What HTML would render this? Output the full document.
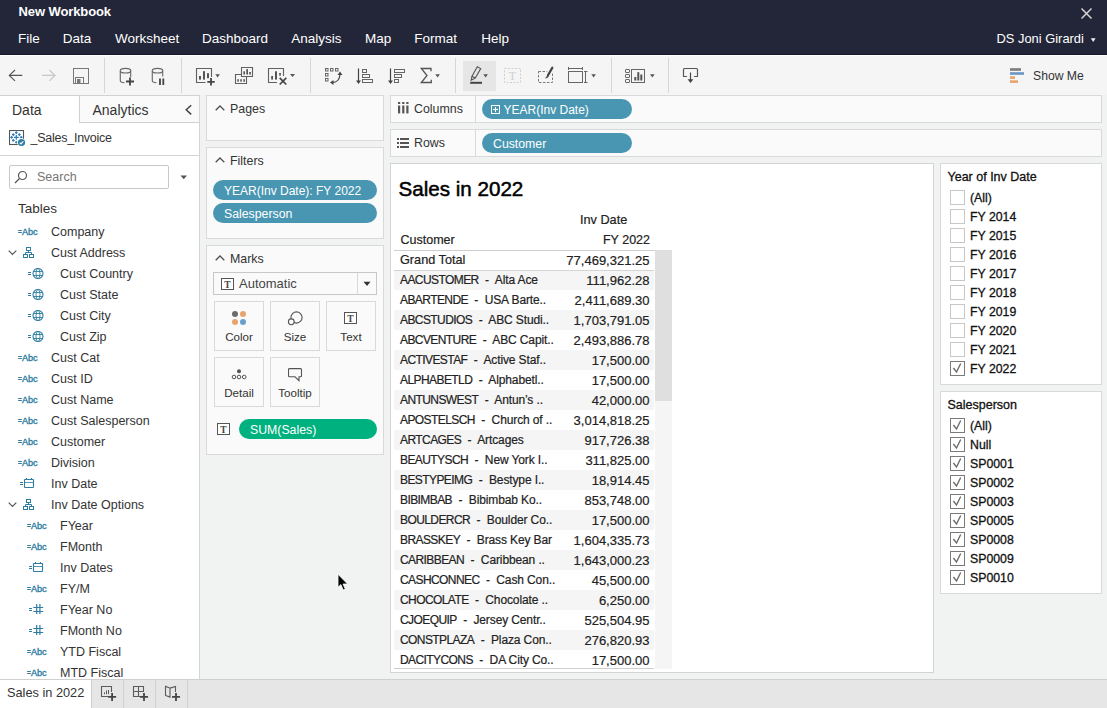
<!DOCTYPE html>
<html><head><meta charset="utf-8"><title>New Workbook</title>
<style>
*{box-sizing:border-box}
html,body{margin:0;padding:0}
body{width:1107px;height:708px;overflow:hidden;background:#f1f3f3;font-family:"Liberation Sans",Arial,sans-serif;font-size:13px;color:#333;position:relative}
.abs{position:absolute}
#hdr{left:0;top:0;width:1107px;height:55px;background:#232638;color:#fff;border-bottom:1px solid #14162a}
#hdr .title{left:18.500px;top:3.600px;font-size:13px;font-weight:bold;letter-spacing:-0.100px}
#hdr .menu span{position:absolute;top:30.700px;font-size:13.500px;white-space:nowrap}
#tb{left:0;top:55px;width:1107px;height:40px;background:#f5f5f5;box-shadow:inset 0 1px 0 #fff}
.sep{position:absolute;top:3px;width:1px;height:35px;background:#dcdcdc}
#left{left:0;top:95px;width:200px;height:584px;background:#fff;border-right:1px solid #d4d4d4;border-top:1px solid #d2d2d2;overflow:hidden}
.fr{position:absolute;left:0;height:21px;line-height:21px;white-space:nowrap;font-size:12.500px;color:#333}
.fr .lbl{position:absolute;top:1px}
.fi{position:absolute}
.abc{color:#2e7c9f;font-size:9.200px;letter-spacing:-0.2px;top:1px;-webkit-text-stroke:0.350px #2e7c9f}
.abc i{font-style:normal;font-size:6.500px;position:relative;top:-1.200px;letter-spacing:0;margin-right:0.300px}
.card{position:absolute;background:#fafafa;border:1px solid #d9d9d9}
.pill{position:absolute;height:20px;border-radius:10px;color:#fff;font-size:12.300px;line-height:23px;white-space:nowrap;overflow:hidden}
.blue{background:#4996b2}
.green{background:#00b180}
.ctitle{position:absolute;font-size:12.400px;color:#333;margin-top:1px}
.mbtn{position:absolute;width:50px;height:50px;border:1px solid #d9d9d9;background:#fafafa;text-align:center;font-size:12px}
.mbtn span{position:absolute;left:0;width:100%;top:27.900px;font-size:11.600px}
#view{left:390px;top:163px;width:544px;height:510px;background:#fff;border:1px solid #d4d4d4}
.vt{font-family:"Liberation Sans",sans-serif;-webkit-text-stroke:0.200px #222}
.row{position:absolute;left:3px;width:260px;height:20px}
.row .c1{position:absolute;left:6px;top:0;line-height:20px;font-size:12px;letter-spacing:-0.120px;white-space:nowrap;color:#222}
.row .c2{position:absolute;right:22px;top:-0.500px;line-height:21px;font-size:13px;white-space:nowrap;color:#222}
.row .c1 b{font-weight:normal;letter-spacing:-0.580px}
.shade{background:#f5f5f5}
.cb{position:absolute;left:9px;width:15px;height:15px;border:1px solid #c8c8c8;background:#fff}
.cb.on{border-color:#7a7a7a}
.fl{position:absolute;left:29px;font-size:12.300px;color:#111;-webkit-text-stroke:0.300px #111;white-space:nowrap;line-height:19px}
#bot{left:0;top:679px;width:1107px;height:29px;background:#e6e6e6;border-top:1px solid #cfcfcf}
</style></head><body>

<div id="hdr" class="abs"><div class="abs title">New Workbook</div><div class="menu">
<span style="left:18px">File</span>
<span style="left:62.8px">Data</span>
<span style="left:115px">Worksheet</span>
<span style="left:202px">Dashboard</span>
<span style="left:291.3px">Analysis</span>
<span style="left:365px">Map</span>
<span style="left:414.3px">Format</span>
<span style="left:481.2px">Help</span>
<span style="left:996.500px;font-size:12.900px;top:31.200px">DS Joni Girardi</span>
</div>
<svg class="abs" style="left:1080px;top:7px" width="13" height="13" viewBox="0 0 13 13"><path d="M1.500 1.500L11.500 11.500M11.500 1.500L1.500 11.500" stroke="#d4d4d4" stroke-width="1.500" fill="none"/></svg>
<svg class="abs" style="left:1090px;top:37px" width="7" height="6" viewBox="0 0 7 6"><path d="M0.800 1.200H5.600L3.200 5Z" fill="#f0f0f0"/></svg>
</div>
<div id="tb" class="abs">
<svg class="abs" style="left:0;top:0" width="1107" height="40" viewBox="0 0 1107 40">
<g fill="none" stroke="#555" stroke-width="1.150">
<path d="M9.300 20.400H22.300M15 15L9.300 20.400L15 25.800"/>
</g>
<g fill="none" stroke="#c6c6c6" stroke-width="1.150">
<path d="M42 20.400H55M49.300 15L55 20.400L49.300 25.800"/>
</g>
<g fill="none" stroke="#777" stroke-width="1">
<rect x="73.500" y="13.500" width="15" height="15"/>
<rect x="75.500" y="22.500" width="8" height="6"/>
<rect x="77.500" y="24.500" width="2.500" height="4" fill="#777"/>
</g>
<g fill="#d6d6d6">
<rect x="104" y="3" width="1" height="35"/><rect x="181" y="3" width="1" height="35"/><rect x="310" y="3" width="1" height="35"/><rect x="455" y="3" width="1" height="35"/><rect x="611" y="3" width="1" height="35"/><rect x="668" y="3" width="1" height="35"/>
</g>
<rect x="463" y="6" width="33" height="30" fill="#e6e6e6"/>
<!-- cylinders -->
<g fill="none" stroke="#6a6a6a" stroke-width="1.150">
<ellipse cx="125.500" cy="15.700" rx="5.200" ry="2.300"/>
<path d="M120.300 15.700V25.500C120.300 26.800 122 27.700 124.500 27.800M130.700 15.700V22"/>
<ellipse cx="157.500" cy="15.700" rx="5.200" ry="2.300"/>
<path d="M152.300 15.700V25.500C152.300 26.800 154 27.700 156.500 27.800M162.700 15.700V21.500"/>
</g>
<g fill="none" stroke="#444" stroke-width="1.800">
<path d="M130 22.500V30.500M126 26.500H134"/>
<path d="M160 23.500V30M163.300 23.500V30"/>
</g>
<!-- new worksheet chart+ -->
<g fill="none" stroke="#606060" stroke-width="1.100">
<path d="M211.500 22V13.500H196.500V27.500H205.500"/>
<path d="M241.500 19.500H235.500V28.500H246.500V22M241.500 12.500H252.500V21.500H241.500Z"/>
<path d="M283.500 21V13.500H268.500V27.500H277"/>
</g>
<g fill="#555">
<rect x="199" y="21" width="2" height="3.600"/><rect x="203" y="16.200" width="2" height="8.400"/><rect x="207" y="18.200" width="2" height="5"/>
<rect x="271.200" y="21" width="1.800" height="3.600"/><rect x="275" y="16.300" width="2" height="8.300"/><rect x="279.200" y="18" width="1.700" height="2.600"/>
<rect x="243.400" y="16.300" width="1.600" height="3.200"/><rect x="246.300" y="14.100" width="1.700" height="5.400"/><rect x="249.200" y="17" width="1.700" height="2.500"/>
<rect x="237.300" y="24.200" width="1.500" height="2.500"/><rect x="240.300" y="24.200" width="1.500" height="2.500"/><rect x="243.400" y="24.200" width="1.500" height="2.500"/>
<path d="M215.300 19.300H219.900L217.600 22.400Z"/><path d="M290 19H295L292.500 22.100Z"/><path d="M435.300 19.300H439.900L437.600 22.400Z"/>
<path d="M483.300 19.300H487.900L485.600 22.400Z"/><path d="M591.300 19.300H595.900L593.600 22.400Z"/><path d="M650 19.300H654.600L652.300 22.400Z"/>
</g>
<g fill="none" stroke="#444" stroke-width="1.800">
<path d="M211 23.100V30.500M207.300 26.800H214.700"/>
<path d="M279.700 22.900L286.300 29.500M286.300 22.900L279.700 29.500" stroke-width="1.700"/>
</g>
<!-- swap -->
<g fill="none" stroke="#666" stroke-width="1">
<rect x="325.500" y="13.500" width="2.500" height="2.500"/><rect x="330.500" y="13.500" width="2.500" height="2.500"/><rect x="335.500" y="13.500" width="2.500" height="2.500"/>
<rect x="325.500" y="18.500" width="2.500" height="2.500"/><rect x="325.500" y="23.500" width="2.500" height="2.500"/>
<path d="M340 19C340 24 337 27.500 332 27.500" stroke="#444" stroke-width="1.200"/>
</g>
<path d="M337.500 20L340 16.500L342.500 20ZM333.500 25L330 27.500L333.500 30Z" fill="#444"/>
<!-- sort asc -->
<g fill="none" stroke="#444" stroke-width="1.200">
<path d="M358.500 13.500V27"/><path d="M390.500 13.500V27"/>
</g>
<path d="M356 25.500H361L358.500 29ZM388 25.500H393L390.500 29Z" fill="#444"/>
<g fill="none" stroke="#666" stroke-width="1">
<rect x="362.500" y="14.500" width="4" height="3"/><rect x="362.500" y="19.500" width="7" height="3"/><rect x="362.500" y="24.500" width="10" height="3"/>
<rect x="394.500" y="14.500" width="10" height="3"/><rect x="394.500" y="19.500" width="7" height="3"/><rect x="394.500" y="24.500" width="4" height="3"/>
</g>
<!-- sigma -->
<path d="M431 16.300V13.500H421.300L427 20.500L421.300 27.500H431.300V24.700" fill="none" stroke="#555" stroke-width="1.300"/>
<!-- highlight -->
<g fill="none" stroke="#555" stroke-width="1.100">
<path d="M477.300 11.800L480.700 13.600L475.300 23L472 21.200ZM472 21.200L471.200 25.200L475.300 23"/>
<path d="M470.200 27.800H482" stroke="#444" stroke-width="2"/>
</g>
<!-- T dashed -->
<rect x="504.500" y="13.500" width="16" height="14" fill="none" stroke="#cfcfcf" stroke-dasharray="2 1.500"/>
<text x="512.500" y="25" font-family="Liberation Serif, serif" font-size="12" fill="#cfcfcf" text-anchor="middle">T</text>
<!-- dashed brush -->
<rect x="538.500" y="16.500" width="14" height="11" fill="none" stroke="#7a7a7a" stroke-dasharray="2.500 1.500"/>
<path d="M552.300 12.500L547.200 21.500" stroke="#f5f5f5" stroke-width="5" fill="none"/><path d="M552.300 12.700L548 20.300" stroke="#444" stroke-width="2.300" stroke-linecap="round" fill="none"/><path d="M547.600 20.200L548.600 21.300C548 23 546.500 23.600 544.800 23.300C546 22.500 546.300 21.500 547.600 20.200Z" fill="#444"/>
<!-- fit -->
<g fill="none" stroke="#666" stroke-width="1">
<rect x="568.500" y="16.500" width="14" height="11"/>
<path d="M568 13.500H583M568.500 12V15M582.500 12V15M585.500 16V28M584 16.500H587.500M584 27.500H587.500"/>
</g>
<!-- show cards -->
<g fill="none" stroke="#666" stroke-width="1">
<rect x="625.500" y="14.500" width="4" height="3" rx="0.500"/><rect x="625.500" y="19.500" width="4" height="3" rx="0.500"/><rect x="625.500" y="24.500" width="4" height="3" rx="0.500"/>
<rect x="631.500" y="14.500" width="13" height="13"/>
</g>
<g fill="#555"><rect x="634.300" y="22" width="2" height="3.500"/><rect x="637.300" y="17.200" width="2" height="8.300"/><rect x="640.300" y="19.500" width="2" height="6"/></g>
<!-- download -->
<path d="M687 21.500H683.500V14.500Q683.500 13.500 684.500 13.500H696.500Q697.500 13.500 697.500 14.500V21.500H694" fill="none" stroke="#555" stroke-width="1.200"/>
<path d="M690.500 17.500V25" stroke="#444" stroke-width="1.200"/><path d="M687.600 24.200H693.400L690.500 28Z" fill="#444"/>
<!-- show me -->
<g><rect x="1010" y="13.200" width="11" height="2.600" fill="#7c7c7c"/><rect x="1010" y="17.200" width="14" height="2.600" fill="#6a97c2"/><rect x="1010" y="21.300" width="5" height="2.600" fill="#e8a46b"/><rect x="1010" y="25.300" width="8" height="2.600" fill="#e8a46b"/></g>
<text x="1033" y="25" font-family="Liberation Sans, sans-serif" font-size="12.200" fill="#333">Show Me</text>
</svg>

</div>
<div id="left" class="abs">
<div class="abs" style="left:79px;top:0;width:120px;height:27px;background:#fafafa;border-left:1px solid #d0d0d0;border-bottom:1px solid #d0d0d0"></div>
<div class="abs" style="left:12px;top:5.500px;font-size:14px;color:#333">Data</div>
<div class="abs" style="left:92.500px;top:5.500px;font-size:14px;color:#333">Analytics</div>
<svg class="abs" style="left:184px;top:8px" width="9" height="12" viewBox="0 0 9 12"><path d="M7.200 1.200L2.200 5.800L7.200 10.400" stroke="#444" stroke-width="1.500" fill="none"/></svg>
<svg class="abs" style="left:9px;top:34px" width="17" height="17" viewBox="0 0 17 17"><rect x="0.500" y="0.500" width="14" height="14" fill="#fff" stroke="#555" stroke-width="1.100"/><path d="M6.000 2.600H8.600M7.300 1.300V3.900M3.000 4.600H5.600M4.300 3.300V5.900M9.100 4.600H11.700M10.400 3.300V5.900M1.300 7.400H3.900M2.600 6.100V8.700M10.900 7.400H13.500M12.200 6.100V8.700M3.000 10.400H5.600M4.300 9.100V11.700M6.000 12.300H8.600M7.300 11.000V13.600" stroke="#2c7bc0" stroke-width="1.100" fill="none"/><path d="M4.900 7.400H9.700M7.300 5.000V9.800" stroke="#2c7bc0" stroke-width="1.200" fill="none"/><circle cx="12.500" cy="12.500" r="4.300" fill="#fff"/><circle cx="12.500" cy="12.500" r="3.600" fill="#2e7da3"/><path d="M10.700 12.600L12 13.900L14.300 11.300" stroke="#fff" stroke-width="1.100" fill="none"/></svg>
<div class="abs" style="left:30.500px;top:35px;font-size:12.500px;letter-spacing:-0.250px;color:#333">_Sales_Invoice</div>
<div class="abs" style="left:0;top:59px;width:199px;height:1px;background:#d4d4d4"></div>
<div class="abs" style="left:9px;top:69px;width:160px;height:24px;border:1px solid #c8c8c8;border-radius:2px;background:#fff"></div>
<svg class="abs" style="left:14px;top:74px" width="14" height="14" viewBox="0 0 14 14"><circle cx="8.500" cy="5.500" r="4" fill="none" stroke="#555" stroke-width="1.200"/><path d="M5.500 8.500L1 13" stroke="#555" stroke-width="1.300"/></svg>
<div class="abs" style="left:37px;top:74px;font-size:12.500px;color:#767676">Search</div>
<svg class="abs" style="left:179.500px;top:78.800px" width="8" height="5" viewBox="0 0 8 5"><path d="M0.500 0.500H7L3.750 4.300Z" fill="#555"/></svg>
<div class="abs" style="left:18px;top:104.800px;font-size:13.500px;color:#333">Tables</div>
<div class="fr" style="top:125px">
<span class="fi abc" style="left:18px"><i>=</i>Abc</span>
<span class="lbl" style="left:51px">Company</span></div>
<div class="fr" style="top:146px">
<svg class="fi" style="left:8px;top:8px" width="9" height="6" viewBox="0 0 9 6"><path d="M0.700 0.700L4.500 4.500L8.300 0.700" stroke="#555" stroke-width="1.200" fill="none"/></svg>
<svg class="fi" style="left:23px;top:5px" width="11" height="11" viewBox="0 0 11 11"><g fill="none" stroke="#2e7c9f" stroke-width="1"><rect x="3.500" y="0.500" width="4" height="3"/><rect x="0.500" y="7.500" width="4" height="3"/><rect x="6.500" y="7.500" width="4" height="3"/><path d="M5.500 3.500V5.500M2.500 7.500V5.500H8.500V7.500"/></g></svg>
<span class="lbl" style="left:51px">Cust Address</span></div>
<div class="fr" style="top:167px">
<svg class="fi" style="left:28px;top:5px" width="16" height="12" viewBox="0 0 16 12"><path d="M0 4.5H3M0 6.5H3" stroke="#2e7c9f" stroke-width="1" fill="none"/><g fill="none" stroke="#2e7c9f"><circle cx="10" cy="5.500" r="5" stroke-width="1.100"/><ellipse cx="10" cy="5.500" rx="2" ry="5" stroke-width="0.900"/><path d="M5.800 3.500H14.200M5.800 7.500H14.200" stroke-width="0.900"/></g></svg>
<span class="lbl" style="left:60px">Cust Country</span></div>
<div class="fr" style="top:188px">
<svg class="fi" style="left:28px;top:5px" width="16" height="12" viewBox="0 0 16 12"><path d="M0 4.5H3M0 6.5H3" stroke="#2e7c9f" stroke-width="1" fill="none"/><g fill="none" stroke="#2e7c9f"><circle cx="10" cy="5.500" r="5" stroke-width="1.100"/><ellipse cx="10" cy="5.500" rx="2" ry="5" stroke-width="0.900"/><path d="M5.800 3.500H14.200M5.800 7.500H14.200" stroke-width="0.900"/></g></svg>
<span class="lbl" style="left:60px">Cust State</span></div>
<div class="fr" style="top:209px">
<svg class="fi" style="left:28px;top:5px" width="16" height="12" viewBox="0 0 16 12"><path d="M0 4.5H3M0 6.5H3" stroke="#2e7c9f" stroke-width="1" fill="none"/><g fill="none" stroke="#2e7c9f"><circle cx="10" cy="5.500" r="5" stroke-width="1.100"/><ellipse cx="10" cy="5.500" rx="2" ry="5" stroke-width="0.900"/><path d="M5.800 3.500H14.200M5.800 7.500H14.200" stroke-width="0.900"/></g></svg>
<span class="lbl" style="left:60px">Cust City</span></div>
<div class="fr" style="top:230px">
<svg class="fi" style="left:28px;top:5px" width="16" height="12" viewBox="0 0 16 12"><path d="M0 4.5H3M0 6.5H3" stroke="#2e7c9f" stroke-width="1" fill="none"/><g fill="none" stroke="#2e7c9f"><circle cx="10" cy="5.500" r="5" stroke-width="1.100"/><ellipse cx="10" cy="5.500" rx="2" ry="5" stroke-width="0.900"/><path d="M5.800 3.500H14.200M5.800 7.500H14.200" stroke-width="0.900"/></g></svg>
<span class="lbl" style="left:60px">Cust Zip</span></div>
<div class="fr" style="top:251px">
<span class="fi abc" style="left:18px"><i>=</i>Abc</span>
<span class="lbl" style="left:51px">Cust Cat</span></div>
<div class="fr" style="top:272px">
<span class="fi abc" style="left:18px"><i>=</i>Abc</span>
<span class="lbl" style="left:51px">Cust ID</span></div>
<div class="fr" style="top:293px">
<span class="fi abc" style="left:18px"><i>=</i>Abc</span>
<span class="lbl" style="left:51px">Cust Name</span></div>
<div class="fr" style="top:314px">
<span class="fi abc" style="left:18px"><i>=</i>Abc</span>
<span class="lbl" style="left:51px">Cust Salesperson</span></div>
<div class="fr" style="top:335px">
<span class="fi abc" style="left:18px"><i>=</i>Abc</span>
<span class="lbl" style="left:51px">Customer</span></div>
<div class="fr" style="top:356px">
<span class="fi abc" style="left:18px"><i>=</i>Abc</span>
<span class="lbl" style="left:51px">Division</span></div>
<div class="fr" style="top:377px">
<svg class="fi" style="left:20px;top:5px" width="16" height="12" viewBox="0 0 16 12"><path d="M0 4.5H3M0 6.5H3" stroke="#2e7c9f" stroke-width="1" fill="none"/><g fill="none" stroke="#2e7c9f" stroke-width="1.100"><rect x="4.500" y="1.500" width="9" height="8" rx="0.600"/><path d="M4.500 4.500H13.500" stroke-width="0.800"/><path d="M6.500 0V2M11.500 0V2"/></g></svg>
<span class="lbl" style="left:51px">Inv Date</span></div>
<div class="fr" style="top:398px">
<svg class="fi" style="left:8px;top:8px" width="9" height="6" viewBox="0 0 9 6"><path d="M0.700 0.700L4.500 4.500L8.300 0.700" stroke="#555" stroke-width="1.200" fill="none"/></svg>
<svg class="fi" style="left:23px;top:5px" width="11" height="11" viewBox="0 0 11 11"><g fill="none" stroke="#2e7c9f" stroke-width="1"><rect x="3.500" y="0.500" width="4" height="3"/><rect x="0.500" y="7.500" width="4" height="3"/><rect x="6.500" y="7.500" width="4" height="3"/><path d="M5.500 3.500V5.500M2.500 7.500V5.500H8.500V7.500"/></g></svg>
<span class="lbl" style="left:51px">Inv Date Options</span></div>
<div class="fr" style="top:419px">
<span class="fi abc" style="left:27px"><i>=</i>Abc</span>
<span class="lbl" style="left:60px">FYear</span></div>
<div class="fr" style="top:440px">
<span class="fi abc" style="left:27px"><i>=</i>Abc</span>
<span class="lbl" style="left:60px">FMonth</span></div>
<div class="fr" style="top:461px">
<svg class="fi" style="left:29px;top:5px" width="16" height="12" viewBox="0 0 16 12"><path d="M0 4.5H3M0 6.5H3" stroke="#2e7c9f" stroke-width="1" fill="none"/><g fill="none" stroke="#2e7c9f" stroke-width="1.100"><rect x="4.500" y="1.500" width="9" height="8" rx="0.600"/><path d="M4.500 4.500H13.500" stroke-width="0.800"/><path d="M6.500 0V2M11.500 0V2"/></g></svg>
<span class="lbl" style="left:60px">Inv Dates</span></div>
<div class="fr" style="top:482px">
<span class="fi abc" style="left:27px"><i>=</i>Abc</span>
<span class="lbl" style="left:60px">FY/M</span></div>
<div class="fr" style="top:503px">
<svg class="fi" style="left:29px;top:5px" width="16" height="12" viewBox="0 0 16 12"><path d="M0 4.5H3M0 6.5H3" stroke="#2e7c9f" stroke-width="1" fill="none"/><g fill="none" stroke="#2e7c9f" stroke-width="1.200"><path d="M4.300 3.500H14.200M4.300 7.500H14.200M7.700 0V10M10.900 0V10"/></g></svg>
<span class="lbl" style="left:60px">FYear No</span></div>
<div class="fr" style="top:524px">
<svg class="fi" style="left:29px;top:5px" width="16" height="12" viewBox="0 0 16 12"><path d="M0 4.5H3M0 6.5H3" stroke="#2e7c9f" stroke-width="1" fill="none"/><g fill="none" stroke="#2e7c9f" stroke-width="1.200"><path d="M4.300 3.500H14.200M4.300 7.500H14.200M7.700 0V10M10.900 0V10"/></g></svg>
<span class="lbl" style="left:60px">FMonth No</span></div>
<div class="fr" style="top:545px">
<span class="fi abc" style="left:27px"><i>=</i>Abc</span>
<span class="lbl" style="left:60px">YTD Fiscal</span></div>
<div class="fr" style="top:566px">
<span class="fi abc" style="left:27px"><i>=</i>Abc</span>
<span class="lbl" style="left:60px">MTD Fiscal</span></div>
</div>
<div class="card" style="left:206px;top:95px;width:178px;height:46px"></div>
<div class="card" style="left:206px;top:147px;width:178px;height:92px"></div>
<div class="card" style="left:206px;top:245px;width:178px;height:210px"></div>
<svg class="abs" style="left:214.8px;top:105.3px" width="10" height="6" viewBox="0 0 10 6"><path d="M0.700 5.300L5 1L9.300 5.300" stroke="#505050" stroke-width="1.300" fill="none"/></svg>
<div class="ctitle" style="left:230px;top:101px">Pages</div>
<svg class="abs" style="left:214.8px;top:157.3px" width="10" height="6" viewBox="0 0 10 6"><path d="M0.700 5.300L5 1L9.300 5.300" stroke="#505050" stroke-width="1.300" fill="none"/></svg>
<div class="ctitle" style="left:230px;top:153px">Filters</div>
<svg class="abs" style="left:214.8px;top:255.3px" width="10" height="6" viewBox="0 0 10 6"><path d="M0.700 5.300L5 1L9.300 5.300" stroke="#505050" stroke-width="1.300" fill="none"/></svg>
<div class="ctitle" style="left:230px;top:251px">Marks</div>
<div class="pill blue" style="left:213px;top:180px;width:164px;padding-left:11px;font-size:12px">YEAR(Inv Date): FY 2022</div>
<div class="pill blue" style="left:213px;top:203px;width:164px;padding-left:11px">Salesperson</div>
<div class="abs" style="left:213px;top:272px;width:164px;height:23px;border:1px solid #c8c8c8;background:#fafafa"></div>
<div class="abs" style="left:357px;top:273px;width:1px;height:21px;background:#d9d9d9"></div>
<svg class="abs" style="left:221px;top:278px" width="13" height="12" viewBox="0 0 13 12"><rect x="0.500" y="0.500" width="12" height="11" fill="#fff" stroke="#555"/><text x="6.500" y="9.500" font-family="Liberation Serif, serif" font-size="9.500" font-weight="bold" text-anchor="middle" fill="#444">T</text></svg>
<div class="abs" style="left:239px;top:276px;font-size:13px;color:#444">Automatic</div>
<svg class="abs" style="left:363px;top:281px" width="8" height="6" viewBox="0 0 8 6"><path d="M0.500 0.800H7.500L4 5Z" fill="#333"/></svg>
<div class="mbtn" style="left:214px;top:301px"><svg class="abs" style="left:16px;top:8px" width="16" height="16" viewBox="0 0 16 16"><circle cx="4" cy="4" r="3" fill="#6b6b6b"/><circle cx="12" cy="4" r="3" fill="#e8a46b"/><circle cx="4" cy="12" r="3" fill="#e8a46b"/><circle cx="12" cy="12" r="3" fill="#6a9fcb"/></svg><span>Color</span></div>
<div class="mbtn" style="left:270px;top:301px"><svg class="abs" style="left:15.700px;top:8.500px" width="16" height="16" viewBox="0 0 16 16"><circle cx="9.500" cy="6.500" r="5.600" fill="none" stroke="#555" stroke-width="1.100"/><circle cx="4.300" cy="10.800" r="2.900" fill="#fafafa" stroke="#555" stroke-width="1.100"/></svg><span>Size</span></div>
<div class="mbtn" style="left:326px;top:301px"><svg class="abs" style="left:17px;top:10px" width="13" height="12" viewBox="0 0 13 12"><rect x="0.500" y="0.500" width="12" height="11" fill="#fff" stroke="#555"/><text x="6.500" y="9.500" font-family="Liberation Serif, serif" font-size="9.500" font-weight="bold" text-anchor="middle" fill="#444">T</text></svg><span>Text</span></div>
<div class="mbtn" style="left:214px;top:357px"><svg class="abs" style="left:16px;top:11px" width="16" height="12" viewBox="0 0 16 12"><circle cx="8" cy="2.200" r="2" fill="#555"/><circle cx="3" cy="8" r="1.800" fill="none" stroke="#555"/><circle cx="8" cy="8" r="1.800" fill="none" stroke="#555"/><circle cx="13.200" cy="8" r="1.800" fill="none" stroke="#555"/></svg><span>Detail</span></div>
<div class="mbtn" style="left:270px;top:357px"><svg class="abs" style="left:17px;top:10px" width="16" height="15" viewBox="0 0 16 15"><path d="M1.500 0.600H12.500Q13.500 0.600 13.500 1.600V7.800Q13.500 8.800 12.500 8.800H11V12.600L7 8.800H1.500Q0.500 8.800 0.500 7.800V1.600Q0.500 0.600 1.500 0.600Z" fill="none" stroke="#555" stroke-width="1.100"/></svg><span>Tooltip</span></div>
<svg class="abs" style="left:217px;top:423px" width="13" height="12" viewBox="0 0 13 12"><rect x="0.500" y="0.500" width="12" height="11" fill="#fff" stroke="#555"/><text x="6.500" y="9.500" font-family="Liberation Serif, serif" font-size="9.500" font-weight="bold" text-anchor="middle" fill="#444">T</text></svg>
<div class="pill green" style="left:239px;top:419px;width:138px;padding-left:11px">SUM(Sales)</div>
<div class="card" style="left:390px;top:95px;width:712px;height:28px"></div>
<div class="card" style="left:390px;top:129px;width:712px;height:28px"></div>
<div class="abs" style="left:475px;top:96px;width:1px;height:26px;background:#d9d9d9"></div>
<div class="abs" style="left:475px;top:130px;width:1px;height:26px;background:#d9d9d9"></div>
<svg class="abs" style="left:397.500px;top:102.300px" width="11" height="12" viewBox="0 0 11 12"><g fill="#555"><rect x="0" y="0" width="2.200" height="2"/><rect x="4.200" y="0" width="2.200" height="2"/><rect x="8.300" y="0" width="2.200" height="2"/><rect x="0" y="3.500" width="2.200" height="7.900"/><rect x="4.200" y="3.500" width="2.200" height="7.900"/><rect x="8.300" y="3.500" width="2.200" height="7.900"/></g></svg>
<div class="ctitle" style="left:414px;top:101px">Columns</div>
<svg class="abs" style="left:397px;top:138px" width="12" height="10" viewBox="0 0 12 10"><g fill="#555"><rect x="0" y="0" width="2" height="2"/><rect x="0" y="4" width="2" height="2"/><rect x="0" y="8" width="2" height="2"/><rect x="3" y="0" width="9" height="2"/><rect x="3" y="4" width="9" height="2"/><rect x="3" y="8" width="9" height="2"/></g></svg>
<div class="ctitle" style="left:414px;top:135px">Rows</div>
<div class="pill blue" style="left:482px;top:99px;width:150px;padding-left:21.500px;font-size:12px">YEAR(Inv Date)</div>
<svg class="abs" style="left:491px;top:105px" width="9" height="9" viewBox="0 0 9 9"><rect x="0.500" y="0.500" width="8" height="8" fill="none" stroke="#fff"/><path d="M2 4.500H7M4.500 2V7" stroke="#fff"/></svg>
<div class="pill blue" style="left:482px;top:133px;width:150px;padding-left:11px">Customer</div>
<div id="view" class="abs vt">
<div class="abs" style="left:7.500px;top:12.700px;font-size:20.600px;color:#000;white-space:nowrap;-webkit-text-stroke:0.500px #000">Sales in 2022</div>
<div class="abs" style="left:189px;top:46px;font-size:12.700px;line-height:20px;color:#222">Inv Date</div>
<div class="abs" style="left:9.500px;top:66px;font-size:12.500px;line-height:20px;color:#222">Customer</div>
<div class="abs" style="right:283px;top:66px;font-size:12.500px;line-height:20px;color:#222;white-space:nowrap">FY 2022</div>
<div class="abs" style="left:3px;top:86px;width:261px;height:1px;background:#cfcfcf;z-index:2"></div>
<div class="abs" style="left:264px;top:86px;width:17px;height:419px;background:#f5f5f5"></div>
<div class="abs" style="left:264px;top:86px;width:17px;height:151px;background:#dfdfdf"></div>
<div class="row" style="top:86px;width:260px"><span class="c1"><span style="font-size:12.700px;letter-spacing:0">Grand Total</span></span><span class="c2" style="right:4.500px">77,469,321.25</span></div>
<div class="row shade" style="top:106px;width:260px"><span class="c1"><b>AACUSTOMER</b>&nbsp; -&nbsp; Alta Ace</span><span class="c2" style="right:4.500px">111,962.28</span></div>
<div class="row" style="top:126px;width:260px"><span class="c1"><b>ABARTENDE</b>&nbsp; -&nbsp; USA Barte..</span><span class="c2" style="right:4.500px">2,411,689.30</span></div>
<div class="row shade" style="top:146px;width:260px"><span class="c1"><b>ABCSTUDIOS</b>&nbsp; -&nbsp; ABC Studi..</span><span class="c2" style="right:4.500px">1,703,791.05</span></div>
<div class="row" style="top:166px;width:260px"><span class="c1"><b>ABCVENTURE</b>&nbsp; -&nbsp; ABC Capit..</span><span class="c2" style="right:4.500px">2,493,886.78</span></div>
<div class="row shade" style="top:186px;width:260px"><span class="c1"><b>ACTIVESTAF</b>&nbsp; -&nbsp; Active Staf..</span><span class="c2" style="right:4.500px">17,500.00</span></div>
<div class="row" style="top:206px;width:260px"><span class="c1"><b>ALPHABETLD</b>&nbsp; -&nbsp; Alphabetl..</span><span class="c2" style="right:4.500px">17,500.00</span></div>
<div class="row shade" style="top:226px;width:260px"><span class="c1"><b>ANTUNSWEST</b>&nbsp; -&nbsp; Antun’s ..</span><span class="c2" style="right:4.500px">42,000.00</span></div>
<div class="row" style="top:246px;width:260px"><span class="c1"><b>APOSTELSCH</b>&nbsp; -&nbsp; Church of ..</span><span class="c2" style="right:4.500px">3,014,818.25</span></div>
<div class="row shade" style="top:266px;width:260px"><span class="c1"><b>ARTCAGES</b>&nbsp; -&nbsp; Artcages</span><span class="c2" style="right:4.500px">917,726.38</span></div>
<div class="row" style="top:286px;width:260px"><span class="c1"><b>BEAUTYSCH</b>&nbsp; -&nbsp; New York I..</span><span class="c2" style="right:4.500px">311,825.00</span></div>
<div class="row shade" style="top:306px;width:260px"><span class="c1"><b>BESTYPEIMG</b>&nbsp; -&nbsp; Bestype I..</span><span class="c2" style="right:4.500px">18,914.45</span></div>
<div class="row" style="top:326px;width:260px"><span class="c1"><b>BIBIMBAB</b>&nbsp; -&nbsp; Bibimbab Ko..</span><span class="c2" style="right:4.500px">853,748.00</span></div>
<div class="row shade" style="top:346px;width:260px"><span class="c1"><b>BOULDERCR</b>&nbsp; -&nbsp; Boulder Co..</span><span class="c2" style="right:4.500px">17,500.00</span></div>
<div class="row" style="top:366px;width:260px"><span class="c1"><b>BRASSKEY</b>&nbsp; -&nbsp; Brass Key Bar</span><span class="c2" style="right:4.500px">1,604,335.73</span></div>
<div class="row shade" style="top:386px;width:260px"><span class="c1"><b>CARIBBEAN</b>&nbsp; -&nbsp; Caribbean ..</span><span class="c2" style="right:4.500px">1,643,000.23</span></div>
<div class="row" style="top:406px;width:260px"><span class="c1"><b>CASHCONNEC</b>&nbsp; -&nbsp; Cash Con..</span><span class="c2" style="right:4.500px">45,500.00</span></div>
<div class="row shade" style="top:426px;width:260px"><span class="c1"><b>CHOCOLATE</b>&nbsp; -&nbsp; Chocolate ..</span><span class="c2" style="right:4.500px">6,250.00</span></div>
<div class="row" style="top:446px;width:260px"><span class="c1"><b>CJOEQUIP</b>&nbsp; -&nbsp; Jersey Centr..</span><span class="c2" style="right:4.500px">525,504.95</span></div>
<div class="row shade" style="top:466px;width:260px"><span class="c1"><b>CONSTPLAZA</b>&nbsp; -&nbsp; Plaza Con..</span><span class="c2" style="right:4.500px">276,820.93</span></div>
<div class="row" style="top:486px;width:260px"><span class="c1"><b>DACITYCONS</b>&nbsp; -&nbsp; DA City Co..</span><span class="c2" style="right:4.500px">17,500.00</span></div>
<div class="abs" style="left:3px;top:106px;width:260px;height:1px;background:#d4d4d4;z-index:2"></div>
<div class="abs" style="left:3px;top:504px;width:260px;height:1px;background:#cfcfcf"></div>
</div>
<div class="card" style="left:940px;top:163px;width:162px;height:222px;background:#fff">
<div class="abs" style="left:6.500px;top:6px;font-size:12.500px;color:#111;-webkit-text-stroke:0.300px #111;white-space:nowrap">Year of Inv Date</div>
<div class="cb" style="top:26px"></div><div class="fl" style="top:24.5px">(All)</div>
<div class="cb" style="top:45px"></div><div class="fl" style="top:43.5px">FY 2014</div>
<div class="cb" style="top:64px"></div><div class="fl" style="top:62.5px">FY 2015</div>
<div class="cb" style="top:83px"></div><div class="fl" style="top:81.5px">FY 2016</div>
<div class="cb" style="top:102px"></div><div class="fl" style="top:100.5px">FY 2017</div>
<div class="cb" style="top:121px"></div><div class="fl" style="top:119.5px">FY 2018</div>
<div class="cb" style="top:140px"></div><div class="fl" style="top:138.5px">FY 2019</div>
<div class="cb" style="top:159px"></div><div class="fl" style="top:157.5px">FY 2020</div>
<div class="cb" style="top:178px"></div><div class="fl" style="top:176.5px">FY 2021</div>
<div class="cb on" style="top:197px"><svg class="abs" style="left:0;top:0" width="13" height="13" viewBox="0 0 13 13"><path d="M2.400 6L5.500 10L9.700 1.500" stroke="#6c6c6c" stroke-width="1.400" fill="none"/></svg></div><div class="fl" style="top:195.5px">FY 2022</div>
</div>
<div class="card" style="left:940px;top:391px;width:162px;height:203px;background:#fff">
<div class="abs" style="left:6.500px;top:6px;font-size:12.500px;color:#111;-webkit-text-stroke:0.300px #111;white-space:nowrap">Salesperson</div>
<div class="cb on" style="top:26px"><svg class="abs" style="left:0;top:0" width="13" height="13" viewBox="0 0 13 13"><path d="M2.400 6L5.500 10L9.700 1.500" stroke="#6c6c6c" stroke-width="1.400" fill="none"/></svg></div><div class="fl" style="top:24.5px">(All)</div>
<div class="cb on" style="top:45px"><svg class="abs" style="left:0;top:0" width="13" height="13" viewBox="0 0 13 13"><path d="M2.400 6L5.500 10L9.700 1.500" stroke="#6c6c6c" stroke-width="1.400" fill="none"/></svg></div><div class="fl" style="top:43.5px">Null</div>
<div class="cb on" style="top:64px"><svg class="abs" style="left:0;top:0" width="13" height="13" viewBox="0 0 13 13"><path d="M2.400 6L5.500 10L9.700 1.500" stroke="#6c6c6c" stroke-width="1.400" fill="none"/></svg></div><div class="fl" style="top:62.5px">SP0001</div>
<div class="cb on" style="top:83px"><svg class="abs" style="left:0;top:0" width="13" height="13" viewBox="0 0 13 13"><path d="M2.400 6L5.500 10L9.700 1.500" stroke="#6c6c6c" stroke-width="1.400" fill="none"/></svg></div><div class="fl" style="top:81.5px">SP0002</div>
<div class="cb on" style="top:102px"><svg class="abs" style="left:0;top:0" width="13" height="13" viewBox="0 0 13 13"><path d="M2.400 6L5.500 10L9.700 1.500" stroke="#6c6c6c" stroke-width="1.400" fill="none"/></svg></div><div class="fl" style="top:100.5px">SP0003</div>
<div class="cb on" style="top:121px"><svg class="abs" style="left:0;top:0" width="13" height="13" viewBox="0 0 13 13"><path d="M2.400 6L5.500 10L9.700 1.500" stroke="#6c6c6c" stroke-width="1.400" fill="none"/></svg></div><div class="fl" style="top:119.5px">SP0005</div>
<div class="cb on" style="top:140px"><svg class="abs" style="left:0;top:0" width="13" height="13" viewBox="0 0 13 13"><path d="M2.400 6L5.500 10L9.700 1.500" stroke="#6c6c6c" stroke-width="1.400" fill="none"/></svg></div><div class="fl" style="top:138.5px">SP0008</div>
<div class="cb on" style="top:159px"><svg class="abs" style="left:0;top:0" width="13" height="13" viewBox="0 0 13 13"><path d="M2.400 6L5.500 10L9.700 1.500" stroke="#6c6c6c" stroke-width="1.400" fill="none"/></svg></div><div class="fl" style="top:157.5px">SP0009</div>
<div class="cb on" style="top:178px"><svg class="abs" style="left:0;top:0" width="13" height="13" viewBox="0 0 13 13"><path d="M2.400 6L5.500 10L9.700 1.500" stroke="#6c6c6c" stroke-width="1.400" fill="none"/></svg></div><div class="fl" style="top:176.5px">SP0010</div>
</div>
<div id="bot" class="abs">
<div class="abs" style="left:0;top:0;width:92px;height:28px;background:#fff;border-right:1px solid #cfcfcf"></div>
<div class="abs" style="left:7px;top:5px;font-size:12.750px;color:#333;white-space:nowrap">Sales in 2022</div>
<div class="abs" style="left:123px;top:0;width:1px;height:28px;background:#d0d0d0"></div><div class="abs" style="left:155px;top:0;width:1px;height:28px;background:#d0d0d0"></div><div class="abs" style="left:187px;top:0;width:1px;height:28px;background:#d0d0d0"></div>
<svg class="abs" style="left:94px;top:1px" width="100" height="27" viewBox="0 0 100 27">
<g fill="none" stroke="#5c5c5c" stroke-width="1.100">
<path d="M17.500 11V5.500H7.500V15.500H14"/>
<path d="M49.500 11V5.500H39.500V15.500H46M39.500 10.500H49.500M44.500 5.500V15.500"/>
<path d="M71.500 5.400V14.400L76 16.100V7.100ZM76 7.100L81.500 5.400V11"/>
</g>
<g fill="#5c5c5c"><rect x="10" y="11.400" width="1" height="1.800"/><rect x="12" y="9.400" width="1" height="3.800"/><rect x="14" y="9" width="1" height="4.200"/></g>
<g stroke="#444" stroke-width="1.800" fill="none">
<path d="M18.100 11.900V19.900M14.100 15.900H22.100"/>
<path d="M50 11.900V19.900M46 15.900H54"/>
<path d="M82 11.900V19.900M78 15.900H86"/>
</g>
</svg>

</div>
<svg class="abs" style="left:337px;top:573px" width="12" height="18" viewBox="0 0 12 18"><path d="M1 1.300V14.200L3.900 11.600L6.200 17L8.300 16L6 11H10.600Z" fill="#000" stroke="#fff" stroke-width="0.800"/></svg>
</body></html>
